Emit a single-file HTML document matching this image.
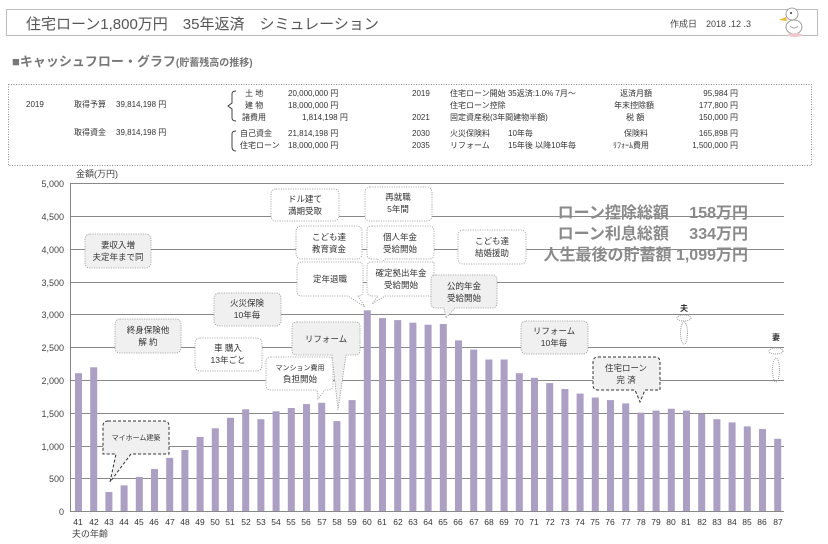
<!DOCTYPE html>
<html><head><meta charset="utf-8"><style>
html,body{margin:0;padding:0;background:#fff;width:828px;height:544px;overflow:hidden}
svg{display:block}
text{font-family:"Liberation Sans","Noto Sans CJK JP",sans-serif;fill:#333}
.s{font-size:8px}
.c{font-size:8.5px;text-anchor:middle}
.b{fill:#ab9fc3}
.g{stroke:#888;stroke-width:1}
.bx{fill:#fff;stroke:#999;stroke-width:.8;stroke-dasharray:1.2 1.2}
.bg{fill:#f0f0f0;stroke:#999;stroke-width:.8;stroke-dasharray:1.2 1.2}
.bd{fill:#f0f0f0;stroke:#333;stroke-width:1;stroke-dasharray:3 2}
.yl{font-size:9px;text-anchor:end;fill:#444}
.xl{font-size:8.5px;text-anchor:middle;fill:#444}
.big{font-size:16px;font-weight:bold;fill:#8a8a8a;text-anchor:end}
</style></head><body>
<svg width="828" height="544" viewBox="0 0 828 544" xmlns="http://www.w3.org/2000/svg">
<rect x="6.5" y="9.5" width="811" height="26" fill="#fff" stroke="#bbb"/>
<text x="26" y="29" style="font-size:15px;fill:#555">住宅ローン1,800万円　35年返済　シミュレーション</text>
<text x="670" y="27" style="font-size:9px;fill:#444">作成日　2018 .12 .3</text>
<g transform="translate(778,4)">
<ellipse cx="14" cy="10" rx="6" ry="6" fill="#fff" stroke="#888" stroke-width=".8"/>
<circle cx="13" cy="9" r="1" fill="#333"/>
<path d="M8 13 L1 16 L9 17 Z" fill="#e8b830"/>
<ellipse cx="16" cy="23" rx="8" ry="7" fill="#fff" stroke="#888" stroke-width=".8"/>
<path d="M12 22 Q16 26 20 22" fill="none" stroke="#888" stroke-width=".7"/>
<ellipse cx="17" cy="31" rx="7" ry="2" fill="#f2c8d0"/>
</g>
<text x="12" y="66" style="font-size:13px;font-weight:bold;fill:#777">■キャッシュフロー・グラフ<tspan style="font-size:10px">(貯蓄残高の推移)</tspan></text>
<rect x="8.5" y="84.5" width="803" height="81" fill="none" stroke="#888" stroke-dasharray="1 1.5"/>
<g class="s">
<text x="26" y="107">2019</text>
<text x="74" y="107">取得予算</text><text x="116" y="107">39,814,198 円</text>
<text x="74" y="135">取得資金</text><text x="116" y="135">39,814,198 円</text>
<text x="245" y="96">土  地</text><text x="288" y="96">20,000,000 円</text>
<text x="245" y="108">建  物</text><text x="288" y="108">18,000,000 円</text>
<text x="242" y="120">諸費用</text><text x="302" y="120">1,814,198 円</text>
<text x="240" y="136">自己資金</text><text x="288" y="136">21,814,198 円</text>
<text x="240" y="148">住宅ローン</text><text x="288" y="148">18,000,000 円</text>
<text x="412" y="96">2019</text><text x="450" y="96">住宅ローン開始  35返済:1.0%  7月～</text>
<text x="450" y="108">住宅ローン控除</text>
<text x="412" y="120">2021</text><text x="450" y="120">固定資産税(3年間建物半額)</text>
<text x="412" y="136">2030</text><text x="450" y="136">火災保険料</text><text x="508" y="136">10年毎</text>
<text x="412" y="148">2035</text><text x="450" y="148">リフォーム</text><text x="508" y="148">15年後 以降10年毎</text>
<text x="620" y="96">返済月額</text><text x="738" y="96" text-anchor="end">95,984 円</text>
<text x="614" y="108">年末控除額</text><text x="738" y="108" text-anchor="end">177,800 円</text>
<text x="626" y="120">税  額</text><text x="738" y="120" text-anchor="end">150,000 円</text>
<text x="624" y="136">保険料</text><text x="738" y="136" text-anchor="end">165,898 円</text>
<text x="613" y="148">ﾘﾌｫｰﾑ費用</text><text x="738" y="148" text-anchor="end">1,500,000 円</text>
</g>
<path d="M236 91 Q232 91 232 94 V103 L228 106 L232 109 V118 Q232 121 236 121 M236 131 Q232 131 232 134 V147 Q232 151 236 151" fill="none" stroke="#333" stroke-width=".9"/>
<text x="76" y="177" style="font-size:9px;fill:#444">金額(万円)</text>
<g class="g">
<line x1="70" y1="183.5" x2="784" y2="183.5"/><line x1="70" y1="216.5" x2="784" y2="216.5"/>
<line x1="70" y1="249.5" x2="784" y2="249.5"/><line x1="70" y1="282.5" x2="784" y2="282.5"/>
<line x1="70" y1="314.5" x2="784" y2="314.5"/><line x1="70" y1="347.5" x2="784" y2="347.5"/>
<line x1="70" y1="380.5" x2="784" y2="380.5"/><line x1="70" y1="413.5" x2="784" y2="413.5"/>
<line x1="70" y1="446.5" x2="784" y2="446.5"/><line x1="70" y1="478.5" x2="784" y2="478.5"/>
<line x1="70" y1="511.5" x2="784" y2="511.5"/><line x1="70.5" y1="183" x2="70.5" y2="512"/>
</g>
<g>
<text class="yl" x="64" y="187">5,000</text><text class="yl" x="64" y="220">4,500</text>
<text class="yl" x="64" y="253">4,000</text><text class="yl" x="64" y="286">3,500</text>
<text class="yl" x="64" y="318">3,000</text><text class="yl" x="64" y="351">2,500</text>
<text class="yl" x="64" y="384">2,000</text><text class="yl" x="64" y="417">1,500</text>
<text class="yl" x="64" y="450">1,000</text><text class="yl" x="64" y="482">500</text>
<text class="yl" x="64" y="515">0</text>
</g>
<text class="big" x="748" y="218">ローン控除総額　 158万円</text>
<text class="big" x="748" y="239">ローン利息総額　 334万円</text>
<text class="big" x="748" y="260">人生最後の貯蓄額  1,099万円</text>
<g class="b">
<rect x="75" y="373.2" width="7" height="137.8"/><rect x="90.2" y="367.3" width="7" height="143.7"/>
<rect x="105.4" y="492" width="7" height="19"/><rect x="120.6" y="485.4" width="7" height="25.6"/>
<rect x="135.8" y="476.9" width="7" height="34.1"/><rect x="151" y="469" width="7" height="42"/>
<rect x="166.2" y="457.9" width="7" height="53.1"/><rect x="181.4" y="450" width="7" height="61"/>
<rect x="196.6" y="436.9" width="7" height="74.1"/><rect x="211.8" y="428.3" width="7" height="82.7"/>
<rect x="227" y="417.8" width="7" height="93.2"/><rect x="242.2" y="409.3" width="7" height="101.7"/>
<rect x="257.4" y="419.2" width="7" height="91.8"/><rect x="272.6" y="411.3" width="7" height="99.7"/>
<rect x="287.8" y="408" width="7" height="103"/><rect x="303" y="404.1" width="7" height="106.9"/>
<rect x="318.2" y="402.8" width="7" height="108.2"/><rect x="333.4" y="421.1" width="7" height="89.9"/>
<rect x="348.6" y="400.1" width="7" height="110.9"/><rect x="363.8" y="310.3" width="7" height="200.7"/>
<rect x="379" y="318.1" width="7" height="192.9"/><rect x="394.2" y="320.1" width="7" height="190.9"/>
<rect x="409.4" y="322.7" width="7" height="188.3"/><rect x="424.6" y="324.7" width="7" height="186.3"/>
<rect x="439.8" y="324" width="7" height="187"/><rect x="455" y="340.4" width="7" height="170.6"/>
<rect x="470.2" y="349.6" width="7" height="161.4"/><rect x="485.4" y="359.5" width="7" height="151.5"/>
<rect x="500.6" y="359.5" width="7" height="151.5"/><rect x="515.8" y="373.2" width="7" height="137.8"/>
<rect x="531" y="377.8" width="7" height="133.2"/><rect x="546.2" y="383.1" width="7" height="127.9"/>
<rect x="561.4" y="389" width="7" height="122"/><rect x="576.6" y="393.6" width="7" height="117.4"/>
<rect x="591.8" y="397.5" width="7" height="113.5"/><rect x="607" y="400.1" width="7" height="110.9"/>
<rect x="622.2" y="403.4" width="7" height="107.6"/><rect x="637.4" y="412.6" width="7" height="98.4"/>
<rect x="652.6" y="410.6" width="7" height="100.4"/><rect x="667.8" y="408.7" width="7" height="102.3"/>
<rect x="683" y="410.6" width="7" height="100.4"/><rect x="698.2" y="413.9" width="7" height="97.1"/>
<rect x="713.4" y="419.2" width="7" height="91.8"/><rect x="728.6" y="422.4" width="7" height="88.6"/>
<rect x="743.8" y="426.4" width="7" height="84.6"/><rect x="759" y="429" width="7" height="82"/>
<rect x="774.2" y="438.8" width="7" height="72.2"/>
</g>
<g class="xl">
<text x="78" y="525">41</text><text x="94" y="525">42</text><text x="109" y="525">43</text><text x="124" y="525">44</text><text x="139" y="525">45</text><text x="154" y="525">46</text><text x="170" y="525">47</text><text x="185" y="525">48</text><text x="200" y="525">49</text><text x="215" y="525">50</text><text x="230" y="525">51</text><text x="246" y="525">52</text><text x="261" y="525">53</text><text x="276" y="525">54</text><text x="291" y="525">55</text><text x="306" y="525">56</text><text x="322" y="525">57</text><text x="337" y="525">58</text><text x="352" y="525">59</text><text x="367" y="525">60</text><text x="382" y="525">61</text><text x="398" y="525">62</text><text x="413" y="525">63</text><text x="428" y="525">64</text><text x="443" y="525">65</text><text x="458" y="525">66</text><text x="474" y="525">67</text><text x="489" y="525">68</text><text x="504" y="525">69</text><text x="519" y="525">70</text><text x="534" y="525">71</text><text x="550" y="525">72</text><text x="565" y="525">73</text><text x="580" y="525">74</text><text x="595" y="525">75</text><text x="610" y="525">76</text><text x="626" y="525">77</text><text x="641" y="525">78</text><text x="656" y="525">79</text><text x="671" y="525">80</text><text x="686" y="525">81</text><text x="702" y="525">82</text><text x="717" y="525">83</text><text x="732" y="525">84</text><text x="747" y="525">85</text><text x="762" y="525">86</text><text x="778" y="525">87</text>
</g>
<text x="72" y="537" style="font-size:9px;fill:#444">夫の年齢</text>
<g>
<rect class="bg" x="85" y="234" width="66" height="34" rx="5"/><text class="c" x="118" y="248">妻収入増</text><text class="c" x="118" y="260">夫定年まで同</text>
<rect class="bg" x="115" y="319" width="66" height="34" rx="5"/><text class="c" x="148" y="333">終身保険他</text><text class="c" x="148" y="345">解  約</text>
<rect class="bx" x="195" y="338" width="67" height="33" rx="5"/><text class="c" x="228" y="351">車  購入</text><text class="c" x="228" y="363">13年ごと</text>
<rect class="bg" x="214" y="293" width="67" height="33" rx="5"/><text class="c" x="247" y="306">火災保険</text><text class="c" x="247" y="318">10年毎</text>
<path class="bx" d="M271 357 H328 Q333 357 333 362 V385 Q333 390 328 390 H325 L318 399 L317 390 H271 Q266 390 266 385 V362 Q266 357 271 357 Z"/><text class="c" x="300" y="370" style="font-size:7px">マンション費用</text><text class="c" x="300" y="382">負担開始</text>
<path class="bg" d="M297 322 H355 Q360 322 360 327 V350 Q360 355 355 355 H346 L338 410 L332 355 H297 Q292 355 292 350 V327 Q292 322 297 322 Z"/><text class="c" x="326" y="342">リフォーム</text>
<path class="bd" d="M108 421 H164 Q169 421 169 426 V454 H131 L110 482 L116 454 H103 V426 Q103 421 108 421 Z"/><text class="c" x="136" y="440" style="font-size:7px">マイホーム建築</text>
<rect class="bx" x="271" y="189" width="68" height="32" rx="5"/><text class="c" x="305" y="202">ドル建て</text><text class="c" x="305" y="214">満期受取</text>
<rect class="bx" x="296" y="226" width="66" height="33" rx="5"/><text class="c" x="329" y="240">こども達</text><text class="c" x="329" y="252">教育資金</text>
<path class="bx" d="M302 262 H358 Q363 262 363 267 V291 Q363 296 358 296 H358 L365 307 L348 296 H302 Q297 296 297 291 V267 Q297 262 302 262 Z"/><text class="c" x="330" y="282">定年退職</text>
<rect class="bx" x="365" y="187" width="67" height="34" rx="5"/><text class="c" x="398" y="200">再就職</text><text class="c" x="398" y="212">5年間</text>
<path class="bx" d="M372 226 H429 Q434 226 434 231 V254 Q434 259 429 259 H385 L376 268 L378 259 H372 Q367 259 367 254 V231 Q367 226 372 226 Z"/><text class="c" x="400" y="240">個人年金</text><text class="c" x="400" y="252">受給開始</text>
<path class="bx" d="M372 262 H434 V296 H385 L372 304 L378 296 H372 Q367 296 367 291 V267 Q367 262 372 262 Z"/><text class="c" x="401" y="276">確定拠出年金</text><text class="c" x="401" y="288">受給開始</text>
<rect class="bx" x="458" y="230" width="68" height="34" rx="5"/><text class="c" x="492" y="244">こども達</text><text class="c" x="492" y="256">結婚援助</text>
<path class="bg" d="M436 275 H492 Q497 275 497 280 V303 Q497 308 492 308 H455 L446 318 L444 308 H436 Q431 308 431 303 V280 Q431 275 436 275 Z"/><text class="c" x="464" y="289">公的年金</text><text class="c" x="464" y="301">受給開始</text>
<rect class="bg" x="521" y="321" width="67" height="33" rx="5"/><text class="c" x="554" y="334">リフォーム</text><text class="c" x="554" y="346">10年毎</text>
<path class="bd" d="M598 357 H655 Q660 357 660 362 V390 H645 L640 402 L635 390 H598 Q593 390 593 385 V362 Q593 357 598 357 Z"/><text class="c" x="626" y="371">住宅ローン</text><text class="c" x="626" y="383">完  済</text>
</g>
<text class="c" x="684" y="311" style="font-size:8px;font-weight:bold">夫</text>
<ellipse cx="684" cy="318" rx="7" ry="3" fill="none" stroke="#999" stroke-dasharray="1 1"/>
<ellipse cx="684" cy="333" rx="3.5" ry="11" fill="none" stroke="#999" stroke-dasharray="1 1"/>
<text class="c" x="776" y="340" style="font-size:8px;font-weight:bold">妻</text>
<ellipse cx="776" cy="351" rx="7" ry="3" fill="none" stroke="#999" stroke-dasharray="1 1"/>
<ellipse cx="776" cy="370" rx="3.5" ry="12" fill="none" stroke="#999" stroke-dasharray="1 1"/>
</svg>
</body></html>
